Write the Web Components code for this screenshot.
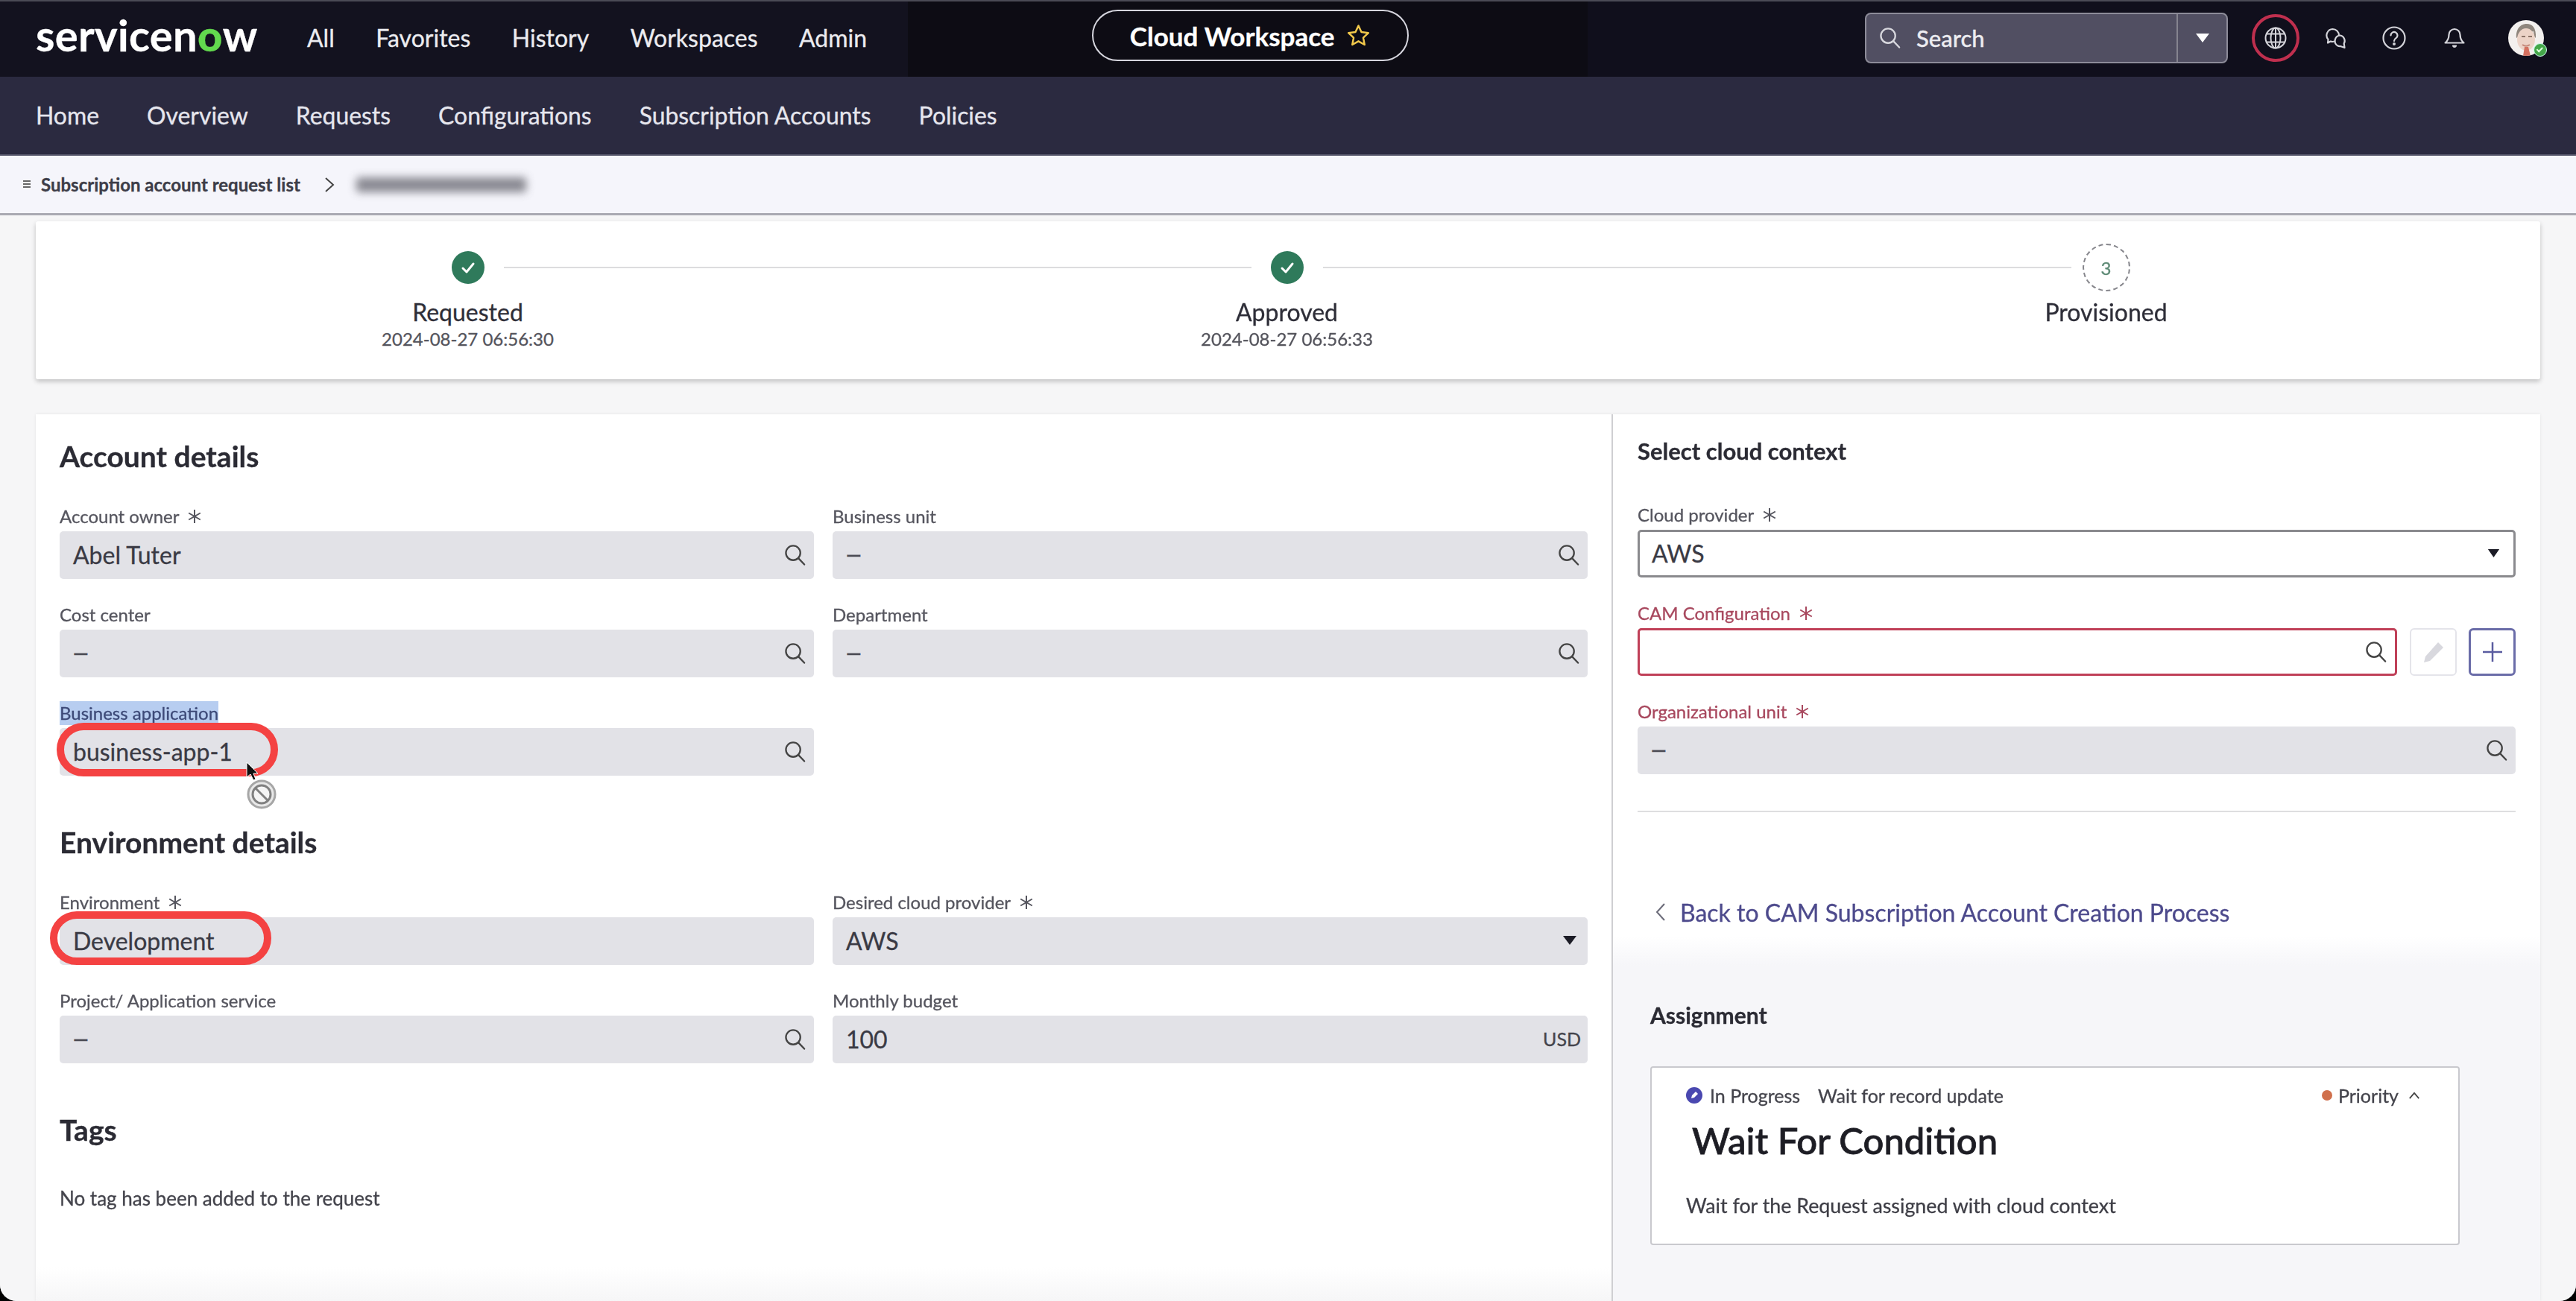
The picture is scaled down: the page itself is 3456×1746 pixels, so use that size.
<!DOCTYPE html>
<html lang="en"><head><meta charset="utf-8"><title>Cloud Workspace</title>
<style>
html,body{margin:0;padding:0;height:100%;background:#000;overflow:hidden}
body{font-family:Lato,"Open Sans",sans-serif}
</style></head><body>
<sn-app>
  <sn-topbar></sn-topbar>
  <sn-navbar></sn-navbar>
  <sn-breadcrumb label="Subscription account request list"></sn-breadcrumb>
  <sn-content>
    <sn-stepper>
      <sn-step state="done" label="Requested" time="2024-08-27 06:56:30" position="first"></sn-step>
      <sn-step state="done" label="Approved" time="2024-08-27 06:56:33"></sn-step>
      <sn-step state="pending" label="Provisioned" number="3" position="last"></sn-step>
    </sn-stepper>
    <sn-main>
      <sn-heading slot="left">Account details</sn-heading>
      <sn-form-grid slot="left" style="margin-top:41px">
        <sn-field label="Account owner" required icon="search">Abel Tuter</sn-field>
        <sn-field label="Business unit" icon="search" muted>—</sn-field>
        <sn-field label="Cost center" icon="search" muted>—</sn-field>
        <sn-field label="Department" icon="search" muted>—</sn-field>
        <sn-field label="Business application" selected icon="search">business-app-1
          <sn-annotation slot="overlay" style="left:-4px;top:-7px"></sn-annotation>
          <sn-drag-cursor slot="overlay"></sn-drag-cursor>
        </sn-field>
      </sn-form-grid>
      <sn-heading slot="left" style="margin-top:65px">Environment details</sn-heading>
      <sn-form-grid slot="left" style="margin-top:41px">
        <sn-field label="Environment" required>Development
          <sn-annotation slot="overlay" style="left:-13px;top:-8px"></sn-annotation>
        </sn-field>
        <sn-field label="Desired cloud provider" required icon="caret">AWS</sn-field>
        <sn-field label="Project/ Application service" icon="search" muted>—</sn-field>
        <sn-field label="Monthly budget" suffix="USD">100</sn-field>
      </sn-form-grid>
      <sn-heading slot="left" style="margin-top:65px">Tags</sn-heading>
      <sn-note slot="left" style="margin-top:52px">No tag has been added to the request</sn-note>

      <sn-context slot="right">
        <sn-heading size="small">Select cloud context</sn-heading>
        <sn-field label="Cloud provider" required icon="caret" variant="select" style="margin-top:46px">AWS</sn-field>
        <sn-field label="CAM Configuration" required icon="search" variant="error" invalid style="margin-top:32px">
          <sn-icon-button slot="after" kind="edit"></sn-icon-button>
          <sn-icon-button slot="after" kind="add"></sn-icon-button>
        </sn-field>
        <sn-field label="Organizational unit" required icon="search" invalid muted style="margin-top:32px">—</sn-field>
        <sn-back-link>Back to CAM Subscription Account Creation Process</sn-back-link>
      </sn-context>
      <sn-assignment slot="right"></sn-assignment>
    </sn-main>
  </sn-content>
</sn-app>
<script>
const ICONS={
 search:'<svg style="display:block" viewBox="0 0 30 30" width="100%" height="100%" fill="none" stroke="currentColor" stroke-width="2.4" stroke-linecap="round"><circle cx="12.5" cy="12.5" r="10"/><line x1="20" y1="20" x2="28" y2="28.500"/></svg>',
 caret:'<svg style="display:block" viewBox="0 0 20 14" width="100%" height="100%" preserveAspectRatio="none"><path d="M1 1h18L10 13z" fill="currentColor"/></svg>'
};
function define(name,css,html,init){
  customElements.define(name,class extends HTMLElement{
    connectedCallback(){
      if(this.shadowRoot)return;
      const r=this.attachShadow({mode:'open'});
      const a=n=>this.getAttribute(n);
      r.innerHTML='<style>'+css+'</style>'+(typeof html==='function'?html(a,this):html);
      if(init)init(r,a,this);
    }
  });
}
define('sn-app',`:host{display:flex;flex-direction:column;width:3456px;height:1746px;overflow:hidden;background:#f6f6f7;border-radius:0 0 22px 22px;font-family:Lato,sans-serif;filter:blur(.5px);-webkit-text-stroke:.3px}`,`<slot></slot>`);

define('sn-topbar',`:host{display:flex;align-items:center;height:103px;padding:0 43px 4px 48px;box-sizing:border-box;color:#ececf0;background:linear-gradient(90deg,#13121f 0,#13121f 1218px,#0d0c14 1218px,#0d0c14 2130px,#100f1c 2130px);border-top:2px solid #4a4a55}
.logo{font:700 58px/1 Lato,sans-serif;letter-spacing:.3px;color:#fff;margin-top:-8px;white-space:nowrap;width:296px}
.logo b{color:#62d84e;font-weight:900}
nav{display:flex;gap:55.500px;margin-left:68px;font-size:32px}
.pill{display:flex;align-items:center;gap:16px;height:69px;box-sizing:border-box;width:425px;justify-content:center;border:2px solid #d6d6de;border-radius:35px;margin-left:302px;font-size:35px;font-weight:700;color:#fff;margin-top:-6px}
.pill svg{width:33px;height:33px}
.search{display:flex;align-items:center;margin-left:auto;width:487px;height:68px;box-sizing:border-box;background:#514f62;border:2px solid #8d8c99;border-radius:8px}
.search .lbl{display:flex;align-items:center;gap:21px;flex:1;padding-left:17px;font-size:31px;font-weight:500;height:100%;box-sizing:border-box;border-right:2px solid #85848f}
.search .lbl .m{width:29px;height:29px;color:#d8d8de}
.search .dd{width:65px;display:flex;justify-content:center;color:#fff}
.search .dd span{width:20px;height:14px}
.ring{width:64px;height:64px;margin-left:32px;box-sizing:border-box;border:4px solid #bf2f4e;border-radius:50%;display:flex;align-items:center;justify-content:center}
.ic{width:30px;height:30px;color:#d4d4da;display:block}
.av{width:48px;height:48px;border-radius:50%;margin-left:57px;position:relative;flex:none}
.av svg{width:48px;height:48px;border-radius:50%;display:block}
.av i{position:absolute;right:-4px;bottom:-1px;width:18px;height:18px;border-radius:50%;background:#45a84a;border:1px solid #cfe;box-sizing:border-box;display:flex;align-items:center;justify-content:center}
.av i::after{content:"";width:6px;height:3px;border-left:2px solid #dfd;border-bottom:2px solid #dfd;transform:rotate(-45deg) translate(0,-1px)}`,
`<div class="logo">servicen<b>o</b>w</div>
<nav><span>All</span><span>Favorites</span><span>History</span><span>Workspaces</span><span>Admin</span></nav>
<div class="pill"><span>Cloud Workspace</span><svg viewBox="0 0 24 24" fill="none" stroke="#f1c84b" stroke-width="1.8" stroke-linejoin="round"><path d="M12 2.500l2.900 6.300 6.800.8-5 4.700 1.300 6.800-6-3.400-6 3.400 1.300-6.800-5-4.700 6.800-.8z"/></svg></div>
<div class="search"><div class="lbl"><span class="m">${ICONS.search}</span><span>Search</span></div><div class="dd"><span>${ICONS.caret}</span></div></div>
<div class="ring"><svg class="ic" viewBox="0 0 30 30" fill="none" stroke="currentColor" stroke-width="2"><circle cx="15" cy="15" r="13.500"/><ellipse cx="15" cy="15" rx="6.500" ry="13.500"/><path d="M15 1.500v27M2.800 9.500h24.400M2.800 20.500h24.400"/></svg></div>
<svg class="ic" style="margin-left:34px" viewBox="0 0 30 30" fill="none" stroke="currentColor" stroke-width="2.200" stroke-linejoin="round"><path d="M10.500 3a8.500 8.500 0 0 1 0 17c-1 0-2-.2-2.800-.5L4 21.500l.5-4.500A8.500 8.500 0 0 1 10.500 3z"/><path d="M21 11.500a7.500 7.500 0 0 0-4 13.800c1.200.6 2.600.9 4 .7l5.500 2-.8-5.500A7.500 7.500 0 0 0 21 11.500z" fill="#100f1c"/></svg>
<svg class="ic" style="margin-left:47px;width:32px;height:32px" viewBox="0 0 32 32" fill="none" stroke="currentColor" stroke-width="2.200" stroke-linecap="round"><circle cx="16" cy="16" r="14.500"/><path d="M11.500 12.500a4.500 4.500 0 1 1 7 3.700c-1.700 1.100-2.500 1.900-2.500 3.800"/><circle cx="16" cy="24" r=".9" fill="currentColor"/></svg>
<svg class="ic" style="margin-left:50px" viewBox="0 0 30 30" fill="none" stroke="currentColor" stroke-width="2.200" stroke-linejoin="round"><path d="M15 3a7.500 7.500 0 0 1 7.500 7.500c0 6 2 8.500 5 11H2.500c3-2.500 5-5 5-11A7.500 7.500 0 0 1 15 3z"/><path d="M13 25.500a2.200 2.200 0 0 0 4 0z" fill="currentColor"/></svg>
<div class="av"><svg viewBox="0 0 48 48"><rect width="48" height="48" fill="#f3f0ee"/><path d="M11 24C10 10 18 5 25 5s13 5 12 19l-2-2-1-7c-6 2-13 2-17-1l-3 8z" fill="#8f867d"/><ellipse cx="24" cy="26" rx="12" ry="15" fill="#ecd3c7"/><path d="M18 22h5M27 22h5" stroke="#8c7468" stroke-width="2"/><path d="M20 48l2-12h5l3 12z" fill="#d4705f"/><path d="M19 33c3 2 7 2 10 0" stroke="#c5897a" stroke-width="2" fill="none"/></svg><i></i></div>`);

define('sn-navbar',`:host{display:flex;align-items:center;gap:64px;height:106px;padding:0 48px;box-sizing:border-box;background:#2b2a40;color:#e6e6ee;font-size:31.900px;border-bottom:2px solid #55556a}`,
`<span>Home</span><span>Overview</span><span>Requests</span><span>Configurations</span><span>Subscription Accounts</span><span>Policies</span>`);

define('sn-breadcrumb',`:host{display:flex;align-items:center;height:80px;box-sizing:border-box;padding-left:31px;background:#f5f5fb;color:#3d3d48;font-size:24px;font-weight:700;border-bottom:3px solid #a9a9b2}
.l{width:10px;height:12px;background:repeating-linear-gradient(#666 0 2px,transparent 2px 4px);margin-right:14px}
svg{width:14px;height:22px;margin:0 29px 0 32px}
.blur{width:228px;height:20px;border-radius:3px;background:#6f6f78;filter:blur(6px);opacity:.8}`,
a=>`<i class="l"></i><span>${a('label')}</span><svg viewBox="0 0 14 22" fill="none" stroke="#444" stroke-width="2"><path d="M2 2l10 9-10 9"/></svg><div class="blur"></div>`);

define('sn-content',`:host{display:flex;flex-direction:column;flex:1;min-height:0;padding:8px 48px 0 48px;background:#f6f6f7}`,`<slot></slot>`);

define('sn-stepper',`:host{display:grid;grid-template-columns:repeat(3,1099px);padding:30px 0 0 30px;height:212px;box-sizing:border-box;background:#fff;box-shadow:0 3px 6px rgba(0,0,0,.22);border-radius:3px;flex:none}`,`<slot></slot>`);

define('sn-step',`:host{display:flex;flex-direction:column;align-items:center}
.mk{display:flex;align-items:center;width:100%;height:64px}
.ln{flex:1;height:2px;background:#dcdcde}
.hide{visibility:hidden}
.c{width:44px;height:44px;border-radius:50%;background:#2f7a5b;margin:0 26px;display:flex;align-items:center;justify-content:center;flex:none}
.c svg{width:24px;height:24px}
.n{width:64px;height:64px;margin:0 15px;background:#fff;border:2.500px dashed #85858b;box-sizing:border-box;color:#5d8a75;font-size:24px}
.lb{font-size:32px;line-height:40px;color:#2e2e38;margin-top:8px}
.tm{font-size:24px;line-height:30px;color:#54545c;margin-top:1px}`,
a=>{const p=a('position');return `<div class="mk"><div class="ln ${p==='first'?'hide':''}"></div>${a('state')==='done'?`<div class="c"><svg viewBox="0 0 24 24" fill="none" stroke="#fff" stroke-width="3" stroke-linecap="round" stroke-linejoin="round"><path d="M5 13l5 5 9-11"/></svg></div>`:`<div class="c n">${a('number')}</div>`}<div class="ln ${p==='last'?'hide':''}"></div></div><div class="lb">${a('label')}</div>${a('time')?`<div class="tm">${a('time')}</div>`:''}`});

define('sn-main',`:host{display:grid;grid-template-columns:2114px 1fr;margin-top:47px;flex:1;min-height:0;background:linear-gradient(#fff 0,#fff 1145px,#f6f6f7 1190px);box-shadow:0 0 4px rgba(0,0,0,.08)}
.l{padding:32px 32px 0 32px;min-width:0}
.r{display:flex;flex-direction:column;border-left:2px solid #cfcfd2;min-width:0;background:linear-gradient(#fff 0,#fff 700px,#f6f6f9 740px)}`,
`<div class="l"><slot name="left"></slot></div><div class="r"><slot name="right"></slot></div>`);

define('sn-heading',`:host{display:block;font-size:39px;line-height:48px;font-weight:700;color:#2b2b34}
:host([size=small]){font-size:31px}`,`<slot></slot>`);

define('sn-form-grid',`:host{display:grid;grid-template-columns:1012px 1013px;column-gap:25px;row-gap:32px}`,`<slot></slot>`);

define('sn-note',`:host{display:block;font-size:26px;line-height:32px;color:#44444c}`,`<slot></slot>`);

define('sn-annotation',`:host{position:absolute;width:297px;height:72px;box-sizing:border-box;border:10px solid #f44242;border-radius:36px;pointer-events:none}`,``);

define('sn-drag-cursor',`:host{position:absolute;left:251px;top:46px;width:50px;height:70px;pointer-events:none}
svg{width:100%;height:100%;overflow:visible}`,
`<svg viewBox="0 0 50 70"><path d="M0 0v20l5-4 4 8 3-1-3-8h6z" fill="#111" stroke="#fff" stroke-width="1"/><circle cx="20" cy="43" r="18" fill="#e8e8e8" stroke="#a6a6a6" stroke-width="3"/><circle cx="20" cy="43" r="12" fill="#f4f4f4" stroke="#808080" stroke-width="3"/><line x1="12" y1="35" x2="28" y2="51" stroke="#808080" stroke-width="3"/></svg>`);

define('sn-field',`:host{display:block;height:100px;font-size:32px;color:#3a3a44}
.lbl{display:flex;align-items:center;height:32px;margin-bottom:4px;font-size:24px;color:#55555e;line-height:32px}
:host([invalid]) .lbl{color:#a8485e}
.t{display:inline-block}
:host([selected]) .t{background:#b7cdf0;color:#3d4a78}
.lbl svg{width:20px;height:20px;margin-left:11px}
.row{display:flex;gap:17px;align-items:stretch}
.box{position:relative;flex:1;min-width:0;height:64px;box-sizing:border-box;border-radius:5px;background:#e2e2e7;display:flex;align-items:center;padding:0 11px 2px 18px}
.v{flex:1;white-space:nowrap}
:host([muted]) .v{color:#4b4b54;font-weight:700;font-size:26px}
.s{width:29px;height:29px;color:#444;flex:none}
.ct{width:20px;height:14px;color:#1c1c26;flex:none;margin-right:3px}
.u{font-size:25px;color:#44444c;margin-right:-2px}
:host([variant=select]) .box{background:#fff;border:3px solid #8a8a8e;padding-left:16px}
:host([variant=select]) .ct{width:17px;height:13px;margin-right:7px}
:host([variant=error]) .box{background:#fff;border:3px solid #c04058}
.after{display:flex;gap:16px}
.after[hidden]{display:none}`,
(a,el)=>{const ic=a('icon');return `<div class="lbl"><span class="t">${a('label')}</span>${a('required')!==null?`<svg viewBox="0 0 20 20" fill="none" stroke="currentColor" stroke-width="2"><path d="M10 1v18M2.200 5.500l15.600 9M17.800 5.500l-15.600 9"/></svg>`:''}</div>
<div class="row"><div class="box"><span class="v"><slot></slot></span>${ic==='search'?`<span class="s">${ICONS.search}</span>`:ic==='caret'?`<span class="ct">${ICONS.caret}</span>`:''}${a('suffix')?`<span class="u">${a('suffix')}</span>`:''}<slot name="overlay"></slot></div><div class="after" ${el.querySelector('[slot=after]')?'':'hidden'}><slot name="after"></slot></div></div>`});

define('sn-icon-button',`:host{display:flex;align-items:center;justify-content:center;width:63px;height:64px;box-sizing:border-box;border-radius:6px;background:#fff;border:2px solid #e4e4ea;color:#d8d8de}
:host([kind=add]){border:3px solid #6a6ca8;color:#5a5ca0}
svg{width:32px;height:32px}`,
a=>a('kind')==='add'?`<svg viewBox="0 0 32 32" stroke="currentColor" stroke-width="2.500"><path d="M16 3v26M3 16h26"/></svg>`:`<svg viewBox="0 0 32 32" fill="currentColor"><path d="M22 3l7 7L11 28l-8 2 2-8z"/></svg>`);

define('sn-context',`:host{display:block;padding:25px 33px 0 33px;height:786px;box-sizing:border-box}`,`<slot></slot>`);

define('sn-back-link',`:host{display:block;border-top:2px solid #dedee0;margin-top:49px;color:#4d4a8c;font-size:32px}
.w{display:flex;align-items:center;gap:19px;margin:114px 0 0 24px;height:40px}
svg{width:14px;height:26px}`,
`<div class="w"><svg viewBox="0 0 14 26" fill="none" stroke="#6a6a78" stroke-width="2"><path d="M12 2L2 13l10 11"/></svg><span><slot></slot></span></div>`);

define('sn-assignment',`:host{display:block;padding:0 108px 0 50px;color:#33333c}
h3{margin:0;font-size:30px;font-weight:700;line-height:40px;color:#2b2b34}
.card{margin-top:49px;height:240px;box-sizing:border-box;background:#fff;border:2px solid #c9c9ce;border-radius:4px;padding:19px 51px 0 46px}
.top{display:flex;align-items:center;font-size:25px;line-height:36px;color:#44444c}
.st{display:flex;align-items:center;gap:10px;margin-right:24px}
.st svg{width:22px;height:22px}
.pr{margin-left:auto;display:flex;align-items:center;gap:8px}
.pr i{width:14px;height:14px;border-radius:50%;background:#d0704c}
.pr svg{width:16px;height:11px;margin-left:5px}
.tt{font-size:49px;line-height:60px;font-weight:500;color:#1d1d24;margin:12px 0 0 8px;-webkit-text-stroke:.8px}
.d{font-size:26.800px;line-height:32px;color:#3e3e46;margin-top:42px}`,
`<h3>Assignment</h3><div class="card"><div class="top"><span class="st"><svg viewBox="0 0 22 22"><circle cx="11" cy="11" r="11" fill="#4a48b0"/><path d="M7 15l1-4 5-5 3 3-5 5z" fill="#fff"/></svg><span>In Progress</span></span><span>Wait for record update</span><span class="pr"><i></i><span>Priority</span><svg viewBox="0 0 18 12" fill="none" stroke="#444" stroke-width="2"><path d="M2 10l7-8 7 8"/></svg></span></div><div class="tt">Wait For Condition</div><div class="d">Wait for the Request assigned with cloud context</div></div>`);
</script>
</body></html>
